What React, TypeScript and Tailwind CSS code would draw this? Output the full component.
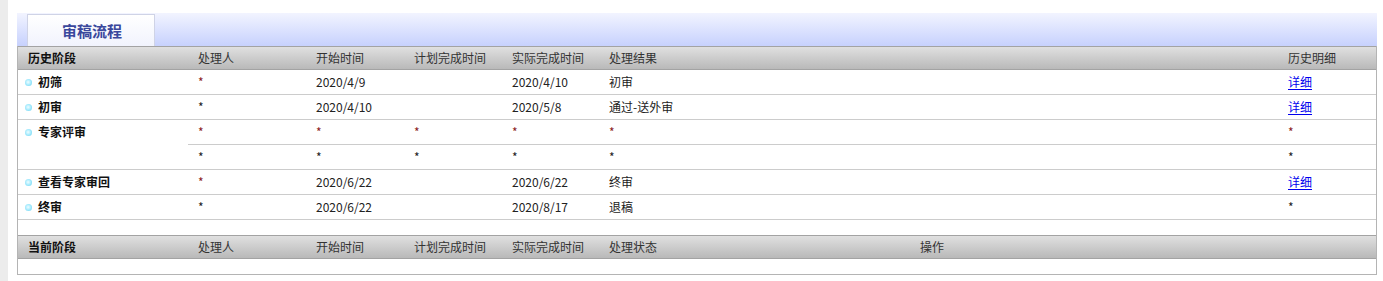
import React from 'react';

type Row = {
  stage: string;
  cells: { text: string; link?: boolean; warn?: boolean }[][];
};

// column widths of the history table: stage, handler, start, planned, actual, result, detail
const histCols = 'grid grid-cols-[170px_118px_98px_98px_97px_679px_98px]';
const curCols = 'grid grid-cols-[170px_118px_98px_98px_97px_311px_466px]';

const headerBg = 'bg-gradient-to-b from-[#e0e0e0] to-[#b9b9b9] border-y border-[#a3a3a3]';

const history: Row[] = [
  {
    stage: '初筛',
    cells: [[{ text: '*', warn: true }, { text: '2020/4/9' }, { text: '' }, { text: '2020/4/10' }, { text: '初审' }, { text: '详细', link: true }]],
  },
  {
    stage: '初审',
    cells: [[{ text: '*' }, { text: '2020/4/10' }, { text: '' }, { text: '2020/5/8' }, { text: '通过-送外审' }, { text: '详细', link: true }]],
  },
  {
    stage: '专家评审',
    cells: [
      [
        { text: '*', warn: true },
        { text: '*', warn: true },
        { text: '*', warn: true },
        { text: '*', warn: true },
        { text: '*', warn: true },
        { text: '*', warn: true },
      ],
      [{ text: '*' }, { text: '*' }, { text: '*' }, { text: '*' }, { text: '*' }, { text: '*' }],
    ],
  },
  {
    stage: '查看专家审回',
    cells: [[{ text: '*', warn: true }, { text: '2020/6/22' }, { text: '' }, { text: '2020/6/22' }, { text: '终审' }, { text: '详细', link: true }]],
  },
  {
    stage: '终审',
    cells: [[{ text: '*' }, { text: '2020/6/22' }, { text: '' }, { text: '2020/8/17' }, { text: '退稿' }, { text: '*' }]],
  },
];

const Bullet = () => (
  <span className="inline-block w-[7px] h-[7px] rounded-full bg-[radial-gradient(circle_at_45%_45%,#f0fdff_0%,#b4efff_40%,#5ccff0_100%)]" />
);

const Cell: React.FC<{ c: { text: string; link?: boolean; warn?: boolean } }> = ({ c }) => (
  <div className="px-[10px] flex items-center h-[24px]">
    {c.link ? (
      <a href="#" className="text-[#0000ee] underline underline-offset-2">
        {c.text}
      </a>
    ) : (
      <span className={c.warn ? 'text-[#8a2222]' : 'text-[#222]'}>{c.text}</span>
    )}
  </div>
);

export default function App() {
  return (
    <div className="flex h-[281px] w-[1383px] bg-white text-[12px] leading-[16px] text-[#111] font-['Microsoft_YaHei','Noto_Sans_CJK_SC',sans-serif]">
      <div className="w-[8px] bg-[#ececec]" />
      <div className="pl-[9px] pt-[13px] w-[1369px]">
        {/* tab strip */}
        <div className="h-[33px] w-[1360px] bg-gradient-to-b from-[#f2f4ff] to-[#c7d1fd] pl-[10px] pt-[1px]">
          <div className="w-[128px] h-[32px] bg-gradient-to-b from-white to-[#f1f3fd] border-x border-t border-[#cfd3e6] flex items-center justify-center pl-[2px]">
            <span className="text-[15px] font-bold text-[#3a489c]">审稿流程</span>
          </div>
        </div>

        <div className="w-[1360px] border-x border-b border-[#b4b4b4]">
          {/* history section */}
          <div className={`${histCols} ${headerBg} h-[24px] items-center`}>
            <div className="px-[10px] font-bold">历史阶段</div>
            <div className="px-[10px] text-[#333]">处理人</div>
            <div className="px-[10px] text-[#333]">开始时间</div>
            <div className="px-[10px] text-[#333]">计划完成时间</div>
            <div className="px-[10px] text-[#333]">实际完成时间</div>
            <div className="px-[10px] text-[#333]">处理结果</div>
            <div className="px-[10px] text-[#333]">历史明细</div>
          </div>

          {history.map((row) => (
            <div key={row.stage} className="flex border-b border-[#cccccc]">
              <div className="w-[170px] h-[24px] flex items-center pl-[7px] gap-[6px] font-bold">
                <Bullet />
                <span>{row.stage}</span>
              </div>
              <div className="flex flex-col">
                {row.cells.map((sub, i) => (
                  <div
                    key={i}
                    className={`grid grid-cols-[118px_98px_98px_97px_679px_98px] ${
                      i < row.cells.length - 1 ? 'border-b border-[#cccccc]' : ''
                    }`}
                  >
                    {sub.map((c, j) => (
                      <Cell key={j} c={c} />
                    ))}
                  </div>
                ))}
              </div>
            </div>
          ))}

          <div className="h-[15px]" />

          {/* current section */}
          <div className={`${curCols} ${headerBg} h-[24px] items-center`}>
            <div className="px-[10px] font-bold">当前阶段</div>
            <div className="px-[10px] text-[#333]">处理人</div>
            <div className="px-[10px] text-[#333]">开始时间</div>
            <div className="px-[10px] text-[#333]">计划完成时间</div>
            <div className="px-[10px] text-[#333]">实际完成时间</div>
            <div className="px-[10px] text-[#333]">处理状态</div>
            <div className="px-[10px] text-[#333]">操作</div>
          </div>
          <div className="h-[15px]" />
        </div>
      </div>
    </div>
  );
}
